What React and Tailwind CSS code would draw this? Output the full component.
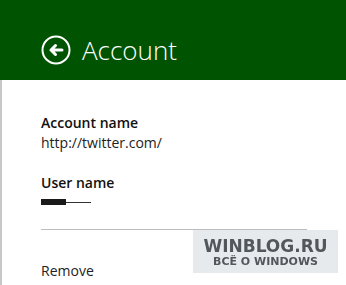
export default function App() {
  return (
    <div className="w-[346px] h-[285px] overflow-hidden bg-white font-['Open_Sans',sans-serif]">
      <div className="h-[80px] bg-[#005300] flex items-center pl-[41px] pt-[19px]">
        <svg width="30" height="30" viewBox="0 0 30 30" className="text-white">
          <circle cx="15" cy="15" r="13.5" fill="none" stroke="currentColor" strokeWidth="2" />
          <path d="M21 15H10M14.5 10.5L10 15l4.5 4.5" fill="none" stroke="currentColor" strokeWidth="3" strokeLinecap="round" strokeLinejoin="round" />
        </svg>
        <span className="ml-[11px] text-[26px] font-light text-white leading-none">Account</span>
      </div>
      <div className="h-[205px] border-l-2 border-[#c8c8c8] pl-[39px] pt-[33px] relative">
        <div className="text-[14px] font-semibold text-[#111] leading-[20px]">Account name</div>
        <div className="text-[14px] text-[#222] leading-[20px]">http://twitter.com/</div>
        <div className="mt-[20px] text-[14px] font-semibold text-[#111] leading-[20px]">User name</div>
        <div className="mt-[6px] flex items-center h-[6px]">
          <div className="w-[25px] h-[6px] bg-[#1a1a1a]" />
          <div className="w-[25px] h-px bg-[#333]" />
        </div>
        <div className="mt-[24px] w-[266px] h-px bg-[#bdbdbd]" />
        <div className="mt-[31px] text-[14px] text-[#222] leading-[20px]">Remove</div>
        <div className="absolute left-[191px] top-[150px] w-[145px] h-[43px] bg-[#e6eaed] flex flex-col items-center justify-center font-['DejaVu_Sans',sans-serif]">
          <div className="text-[17px] font-bold text-[#52575c] leading-[20px] blur-[0.6px]">WINBLOG.RU</div>
          <div className="text-[11px] font-bold text-[#52575c] leading-[12px] blur-[0.4px]">ВСЁ О WINDOWS</div>
        </div>
      </div>
    </div>
  )
}
